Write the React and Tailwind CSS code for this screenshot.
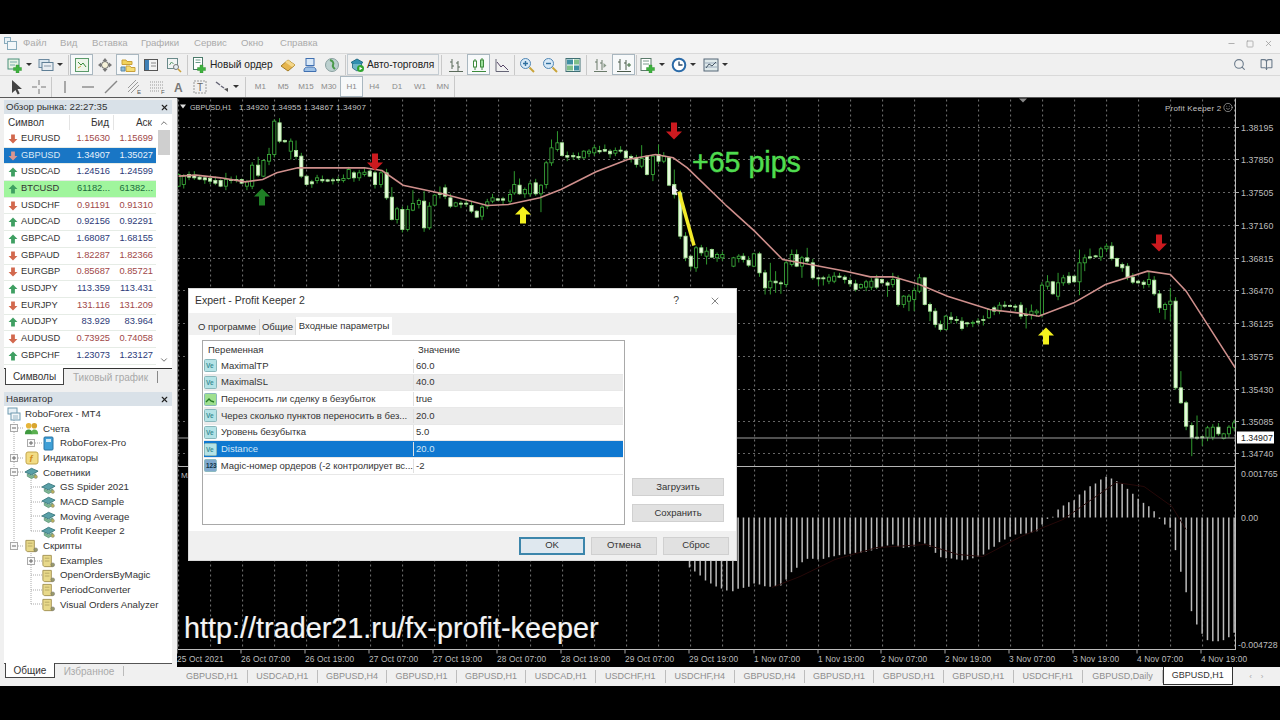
import React from "react";
import { Search, BookOpen, Minus, Square, X, ChevronUp, ChevronDown, Smile } from "lucide-react";

// chart candles, read off the picture: [x, top, bottom, filled, extraHigh, extraLow]
const CANDLES_LEFT = [
  [10,240,275,0],[25,245,270,0],[40,240,248,1],[55,242,250,1],[70,248,254,1],[85,250,256,1],[100,252,260,1],[115,258,266,1],[130,258,275,1],[145,255,275,0,20],[160,255,258,1],[175,255,258,1],[190,255,266,1],[205,262,275,0],[220,212,275,0],[237,212,242,1,25],[252,198,245,0],[268,180,200,0,20],[283,80,180,0,6],[298,85,140,1,14],[313,138,142,1],[330,140,170,0,8,25],[345,168,186,1,30],[360,185,245,1,10],[375,245,270,1],[390,262,268,1],[405,250,258,0],[420,255,259,1],[435,256,260,1],[450,256,258,1,0,12],[465,255,257,1],[480,252,258,0],[495,225,252,0,8],[510,235,250,1],[525,235,250,0],[540,233,240,0],[555,230,245,1],[570,235,270,1],[587,235,270,0],[603,235,310,1],[618,308,375,1,30],[633,343,375,0],[648,345,405,1],[663,345,405,0],[678,327,347,0,40],[695,318,330,0],[710,320,400,1,30,12],[725,335,400,0],[740,302,332,0],[755,296,300,1,20],[770,280,305,1,10],[785,310,335,1],[800,325,335,0],[815,326,329,1],[830,326,328,1],[845,333,350,1],[860,350,368,1],[875,338,365,0,0,12],[890,322,335,0],[905,310,320,0],[920,313,317,1],[935,313,317,1],[955,300,320,0,15],[967,270,295,0,40],[982,272,298,1,20],[997,285,298,0],[1012,268,298,0],[1028,265,298,1],[1043,272,298,0,0,55],[1058,205,270,0],[1073,160,205,0,25],[1090,145,165,0,35],[1103,145,183,1],[1118,183,188,1,12],[1135,183,187,1],[1150,186,190,1],[1165,170,190,0],[1180,170,176,0],[1195,160,175,0],[1210,168,172,1,14],[1225,165,170,1,15],[1240,170,178,1],[1255,168,176,0],[1270,167,170,1],[1285,170,190,1],[1300,186,192,1],[1315,190,210,1],[1330,192,215,0,40],[1345,185,240,1],[1362,185,240,0,0,20],[1378,180,200,1,30],[1393,185,200,0],[1408,190,272,1],[1423,270,300,1,45],[1440,295,425,1],[1455,425,490,1,0,10],[1470,485,515,1,0,12],[1485,460,520,0],[1500,460,475,1],[1515,470,485,0,0,25],[1530,465,488,1],[1545,480,490,0],[1560,480,490,0],
];
const CANDLES_RIGHT = [
  [10,490,515,0],[25,485,492,0],[38,485,495,1],[53,497,512,1],[68,478,515,0],[84,478,535,1],[100,535,580,1,0,20],[115,560,580,0,55,20],[130,560,565,1,30,30],[145,565,568,1,0,30],[160,505,570,0],[176,480,510,0,15],[190,480,515,1,15],[205,490,515,0,0,35],[220,490,500,1,30],[236,505,550,1],[252,550,553,1,0,20],[266,550,553,1,0,20],[282,548,560,0],[297,545,560,0],[312,545,548,1,10],[327,548,555,1],[342,558,568,1],[358,568,585,1],[373,570,580,0],[388,562,578,0],[403,560,578,0],[418,553,578,1],[433,555,565,1],[449,565,572,1,0,35],[464,555,570,0,20],[479,555,630,1],[495,605,630,0,0,10],[510,605,620,0,0,30],[525,588,615,0,0,35],[540,550,590,0],[555,550,630,1],[570,630,650,1,0,30],[585,650,690,1],[600,690,705,1],[615,665,705,0],[630,668,675,1,15],[646,675,678,1,10],[661,680,702,1],[676,685,688,1,0,10],[692,684,686,0],[707,680,682,1],[722,675,678,1,0,15],[738,645,670,0],[753,640,650,1],[768,632,650,0],[783,632,634,1],[798,633,635,1],[813,635,638,1],[829,632,665,1],[844,660,662,1,20,40],[859,650,660,0,20,15],[874,650,655,0],[889,572,660,0],[905,562,575,0,20,10],[920,562,598,1],[935,565,605,0,30],[950,550,565,0],[966,545,565,1],[981,545,562,1],[996,505,562,0,40,40],[1011,490,505,0,10,25],[1026,487,489,1,25],[1042,484,487,1],[1057,463,487,0],[1073,455,463,0,8],[1088,455,492,1],[1103,492,515,1],[1118,510,520,1],[1133,515,548,1],[1148,548,563,1],[1163,560,565,1],[1179,563,570,1],[1194,555,570,0,25],[1209,557,598,1],[1224,598,640,1,10,15],[1240,630,645,0,0,30],[1255,620,630,0,40,50],[1270,620,880,1],[1285,880,925,1,50],[1300,925,995,1],[1316,993,1030,1,0,55],[1331,1028,1030,1,65],[1346,1027,1029,1,0,25],[1361,1000,1028,0],[1376,998,1028,0],[1392,998,1018,1],[1407,1018,1032,0],[1422,998,1018,0],[1437,985,1000,0],
];
const MACD_ENDS = [568,572,576,581,584,587,589,591];
const MACD = [395,388,385,382,372,375,380,382,380,378,360,338,325,308,298,298,300,298,293,290,287,285,283,280,280,277,273,268,262,258,255,262,265,263,260,247,252,262,280,293,296,297,300,302,300,296,292,285,270,262,248,240,232,225,223,222,220,215,195,178,172,150,138,128,122,105,93,80,72,60,52,57,65,72,88,103,118,130,140,155,178,195,205,272,337,398,455,495,523,542,545,545,542,533,520];
const MA_LEFT = [[10,245],[60,242],[130,250],[200,262],[250,255],[290,235],[350,220],[540,220],[590,228],[650,272],[760,297],[890,333],[950,330],[1040,310],[1100,285],[1200,232],[1290,195],[1370,180],[1420,190],[1460,220],[1568,330]];
const MA_RIGHT = [[-14,330],[0,343],[70,410],[150,495],[240,512],[330,530],[400,547],[465,547],[540,570],[620,605],[740,645],[820,655],[880,665],[980,625],[1070,570],[1190,530],[1255,540],[1300,590],[1440,820]];
const PRICES = [["1.38195",128],["1.37850",160],["1.37505",193],["1.37160",226],["1.36815",259],["1.36470",291],["1.36125",324],["1.35775",357],["1.35430",390],["1.35085",422],["1.34740",454]];
const TIMES = [["25 Oct 2021",177],["26 Oct 07:00",241],["26 Oct 19:00",305],["27 Oct 07:00",369],["27 Oct 19:00",433],["28 Oct 07:00",497],["28 Oct 19:00",561],["29 Oct 07:00",625],["29 Oct 19:00",689],["1 Nov 07:00",754],["1 Nov 19:00",818],["2 Nov 07:00",881],["2 Nov 19:00",945],["3 Nov 07:00",1009],["3 Nov 19:00",1073],["4 Nov 07:00",1137],["4 Nov 19:00",1201]];

const QUOTES = [
  ["EURUSD","1.15630","1.15699","down"],["GBPUSD","1.34907","1.35027","down"],["USDCAD","1.24516","1.24599","up"],["BTCUSD","61182...","61382...","up"],["USDCHF","0.91191","0.91310","down"],["AUDCAD","0.92156","0.92291","up"],["GBPCAD","1.68087","1.68155","up"],["GBPAUD","1.82287","1.82366","down"],["EURGBP","0.85687","0.85721","down"],["USDJPY","113.359","113.431","up"],["EURJPY","131.116","131.209","down"],["AUDJPY","83.929","83.964","up"],["AUDUSD","0.73925","0.74058","down"],["GBPCHF","1.23073","1.23127","up"],
];
const TABS = ["GBPUSD,H1","USDCAD,H1","GBPUSD,H4","GBPUSD,H1","GBPUSD,H1","USDCAD,H1","USDCHF,H1","USDCHF,H4","GBPUSD,H4","GBPUSD,H1","GBPUSD,H1","GBPUSD,H1","USDCHF,H1","GBPUSD,Daily"];
const PARAMS = [
  ["v","MaximalTP","60.0"],["v","MaximalSL","40.0"],["b","Переносить ли сделку в безубыток","true"],["v","Через сколько пунктов переносить в без...","20.0"],["v","Уровень безубытка","5.0"],["v","Distance","20.0"],["m","Magic-номер ордеров (-2 контролирует вс...","-2"],
];

const line = (pts, ox) => pts.map(([x, y]) => `${ox + x / 2.85},${95 + y / 3}`).join(" ");

function Candles({ data, ox }) {
  return data.map(([zx, top, bot, filled, hi = 0, lo = 0], i) => {
    const x = ox + zx / 2.85;
    const y1 = 95 + top / 3;
    const y2 = 95 + bot / 3;
    const wickUp = hi ? hi / 3 : (i * 13) % 4 + 1;
    const wickDown = lo ? lo / 3 : (i * 7) % 4 + 1;
    return (
      <g key={i}>
        <line x1={x} x2={x} y1={y1 - wickUp} y2={y2 + wickDown} stroke="#2f9a2f" strokeWidth="1" />
        <rect x={x - 1.6} y={y1} width="3.2" height={Math.max(y2 - y1, 1)} fill={filled ? "#e6fbdc" : "#000"} stroke={filled ? "#a8e498" : "#3fb53f"} strokeWidth="0.8" />
      </g>
    );
  });
}

function Arrow({ x, y, up, color }) {
  const pts = up
    ? `${x},${y} ${x + 8},${y + 8} ${x + 3},${y + 8} ${x + 3},${y + 17} ${x - 3},${y + 17} ${x - 3},${y + 8} ${x - 8},${y + 8}`
    : `${x},${y + 17} ${x + 8},${y + 9} ${x + 3},${y + 9} ${x + 3},${y} ${x - 3},${y} ${x - 3},${y + 9} ${x - 8},${y + 9}`;
  return <polygon points={pts} fill={color} />;
}

function Chart() {
  const grid = [];
  for (let x = 178.6; x < 1235; x += 32) grid.push(x);
  return (
    <svg className="block flex-1 bg-black" width="1103" height="568" viewBox="177 99 1103 568">
      {/* grid */}
      {grid.map((x) => (
        <line key={x} x1={x} x2={x} y1="100" y2="650" stroke="#777" strokeWidth="1" strokeDasharray="2 3" />
      ))}
      {PRICES.map(([label, y]) => (
        <g key={label}>
          <line x1="178" x2="1235" y1={y} y2={y} stroke="#666" strokeWidth="1" strokeDasharray="2 3" />
          <line x1="1235" x2="1239" y1={y} y2={y} stroke="#aaa" />
          <text x="1241" y={y + 3} fontSize="8.8" fill="#bdbdbd" letterSpacing="0.1">{label}</text>
        </g>
      ))}

      <Candles data={CANDLES_LEFT} ox={175} />
      <Candles data={CANDLES_RIGHT} ox={730} />
      <polyline points={line(MA_LEFT, 175)} fill="none" stroke="#cf8f8c" strokeWidth="1.6" />
      <polyline points={line(MA_RIGHT, 730)} fill="none" stroke="#cf8f8c" strokeWidth="1.6" />

      <Arrow x={262} y={189} up color="#1f7f25" />
      <Arrow x={375} y={154} color="#cc1a1f" />
      <Arrow x={674} y={123} color="#cc1a1f" />
      <Arrow x={1159} y={235} color="#cc1a1f" />
      <Arrow x={523} y={207} up color="#f4f11e" />
      <Arrow x={1046} y={328} up color="#f4f11e" />
      <line x1="679" y1="192" x2="694" y2="246" stroke="#f2ea2a" strokeWidth="3.5" />
      <polygon points="672,186 672,195 674.5,193 676,196 677.5,195 676,192 678,191" fill="#eee" />

      {/* price line and separators */}
      <line x1="178" x2="1235" y1="438.5" y2="438.5" stroke="#a0a0a0" />
      <line x1="178" x2="1236" y1="467" y2="467" stroke="#b4b4b4" />
      <line x1="178" x2="1236" y1="650" y2="650" stroke="#bbb" />
      <line x1="1235.5" x2="1235.5" y1="99" y2="650" stroke="#bbb" />
      <line x1="177.5" x2="177.5" y1="99" y2="650" stroke="#888" />
      <rect x="1237" y="432" width="37" height="12" fill="#fff" />
      <text x="1241" y="441.5" fontSize="8.8" fill="#222">1.34907</text>

      {/* macd */}
      {MACD_ENDS.map((y, i) => (
        <line key={i} x1={689.5 + i * 5.33} x2={689.5 + i * 5.33} y1="518" y2={y} stroke="#b8b8b8" strokeWidth="1.5" />
      ))}
      {MACD.map((z, i) => {
        const x = 730 + (8 + i * 15.2) / 2.85;
        return <line key={i} x1={x} x2={x} y1="518" y2={460 + z / 3} stroke="#bcbcbc" strokeWidth="1.5" />;
      })}
      <polyline points="772,588 800,577 835,560 877,548 926,545 958,555 983,557 1021,537 1063,520 1116,483 1144,487 1172,507 1186,530" fill="none" stroke="#260808" strokeWidth="1" />
      <text x="1241" y="477" fontSize="8.8" fill="#bdbdbd">0.001765</text>
      <text x="1241" y="521" fontSize="8.8" fill="#bdbdbd">0.00</text>
      <text x="1238" y="648" fontSize="8.8" fill="#bdbdbd">-0.004728</text>
      <text x="181" y="478" fontSize="8" fill="#bbb">MA</text>

      {/* time axis */}
      {TIMES.map(([label, x]) => (
        <g key={label}>
          <line x1={x} x2={x} y1="650" y2="654" stroke="#aaa" />
          <text x={x} y="662" fontSize="8.4" fill="#bdbdbd" letterSpacing="0.1">{label}</text>
        </g>
      ))}

      {/* chart captions */}
      <polygon points="180,105 186,105 183,109" fill="#ddd" />
      <text x="190" y="110" fontSize="7.2" fill="#c4c4c4">GBPUSD,H1</text>
      <text x="239" y="110" fontSize="8" fill="#c4c4c4" letterSpacing="0.15">1.34920 1.34955 1.34867 1.34907</text>
      <text x="1165" y="111" fontSize="8" fill="#c4c4c4" letterSpacing="0.2">Profit Keeper 2</text>
      <Smile x="1223" y="103" width="10" height="10" color="#c4c4c4" strokeWidth="1.5" />
      <polygon points="1019,99 1027,99 1023,103" fill="#888" />
      <text x="692" y="172" fontSize="28.6" fill="#4fdc4f" stroke="#4fdc4f" strokeWidth="0.5">+65 pips</text>
      <text x="184" y="638" fontSize="28.8" fill="#f4f4f4" stroke="#f4f4f4" strokeWidth="0.2">http://trader21.ru/fx-profit-keeper</text>
    </svg>
  );
}

/* small toolbar drawings */
function Ico({ children, size = 16 }) {
  return <svg width={size} height={size} viewBox="0 0 16 16" fill="none">{children}</svg>;
}
const Caret = () => <span className="ml-[3px] h-0 w-0 border-x-[3px] border-t-[3px] border-x-transparent border-t-[#333]" />;
const Plus = () => <path d="M9 8h3v2.5h2.5v3H12V16H9v-2.5H6.5v-3H9z" fill="#3eb23e" stroke="#2d8a2d" strokeWidth="0.4" />;
const IconNew = () => <Ico><rect x="1" y="2" width="11" height="10" fill="#e8f3e4" stroke="#4b8f7a" /><path d="M3 5h7M3 8h5" stroke="#7aa" /><Plus /></Ico>;
const IconProfiles = () => <Ico><rect x="1" y="2.5" width="10" height="8" fill="#dbe7ef" stroke="#6d8aa0" /><rect x="4" y="5.5" width="11" height="8" fill="#e9eef2" stroke="#5f7f96" /><path d="M6 9h7" stroke="#89a" /></Ico>;
const IconMarket = () => <Ico><rect x="1.5" y="1.5" width="13" height="13" fill="#eef6ea" stroke="#5a9a6a" /><path d="M4 5l3 3 2-2 3 4" stroke="#3a8a3a" /><path d="M4 11l3-2" stroke="#c9a43a" /></Ico>;
const IconNav = () => <Ico><path d="M8 1l2.5 3h-5zM8 15l-2.5-3h5zM1 8l3-2.5v5zM15 8l-3 2.5v-5z" fill="#777" /><circle cx="8" cy="8" r="3.5" stroke="#666" fill="#f5f1d8" /></Ico>;
const IconTerm = () => <Ico><path d="M2 3h4l1 1.5h5v3H2z" fill="#f2d35a" stroke="#c9a03a" /><path d="M6 9h4l1 1.5h4v4H6z" fill="#f5dd75" stroke="#c9a03a" /><path d="M1 10h4v4H1z" fill="#8fbbd8" stroke="#5a89a8" /></Ico>;
const IconData = () => <Ico><rect x="1.5" y="2.5" width="13" height="11" fill="#f3f3f3" stroke="#555" /><rect x="2" y="3" width="4" height="10" fill="#3f7fb5" /><path d="M8 6h5M8 9h5" stroke="#888" /></Ico>;
const IconTester = () => <Ico><rect x="1.5" y="1.5" width="10" height="10" fill="#f1f4f4" stroke="#6a8a8a" /><path d="M3.5 8l2-3 2 2" stroke="#5a9a6a" /><circle cx="10" cy="10" r="2.5" stroke="#777" fill="#e6eef3" /><path d="M12 12l3 3" stroke="#c9a03a" strokeWidth="1.6" /></Ico>;
const IconOrder = () => <Ico><rect x="2.5" y="0.5" width="9" height="12" fill="#fff" stroke="#4a7a6a" /><path d="M4.5 3h5M4.5 5.5h5" stroke="#6a9a8a" /><Plus /></Ico>;
const IconGold = () => <Ico><path d="M1 9l7-6 7 5-7 6z" fill="#e6b54d" stroke="#a37c24" /><path d="M8 3l7 5-3 2-7-5z" fill="#f4d78a" /></Ico>;
const IconCloud = () => <Ico><rect x="4" y="1.5" width="8" height="7" fill="#d9e8f7" stroke="#3f6fb0" /><path d="M2 13c0-2 2-3 4-3h4c2 0 4 1 4 3v1.5H2z" fill="#9cc0e6" stroke="#3f6fb0" /></Ico>;
const IconGlobe = () => <Ico><circle cx="8" cy="8" r="6.5" fill="#bcd0cf" stroke="#8aa0a0" /><path d="M6 3c3 1 4 3 3 5s1 3 2 4" stroke="#4a9a4a" strokeWidth="2" /></Ico>;
const IconAuto = () => <Ico><path d="M2 5.5L8 2l6 3.5L8 9z" fill="#2f8fb0" stroke="#1f6a85" /><path d="M3.5 7v4l4.5 3 4.5-3V7" fill="#6fb6c9" stroke="#3a7a8f" /><circle cx="11.5" cy="11.5" r="3.5" fill="#2ea52e" /><path d="M10.5 9.8l3 1.7-3 1.7z" fill="#fff" /></Ico>;
const IconBars = () => <Ico><path d="M4 2v10M2 5h2M4 9h2M10 4v10M8 6h2M10 10h2M1 14.5h14" stroke="#5a6a5a" /></Ico>;
const IconCandles = () => <Ico><path d="M4 2v11M11 1v12M1 14.5h14" stroke="#3c8a3c" /><rect x="2.5" y="4" width="3" height="6" fill="#fff" stroke="#3c8a3c" /><rect x="9.5" y="3" width="3" height="7" fill="#9adf9a" stroke="#3c8a3c" /></Ico>;
const IconLineChart = () => <Ico><path d="M2 2v12.5h13" stroke="#667" /><path d="M3 5l4 5 2-2 5 5" stroke="#546" /></Ico>;
const IconZoomIn = () => <Ico><circle cx="6.5" cy="6.5" r="5" fill="#d7e9f7" stroke="#4f85b3" /><path d="M4 6.5h5M6.5 4v5" stroke="#2f6f9f" strokeWidth="1.4" /><path d="M10.5 10.5L15 15" stroke="#c9a43a" strokeWidth="2" /></Ico>;
const IconZoomOut = () => <Ico><circle cx="6.5" cy="6.5" r="5" fill="#d7e9f7" stroke="#4f85b3" /><path d="M4 6.5h5" stroke="#2f6f9f" strokeWidth="1.4" /><path d="M10.5 10.5L15 15" stroke="#c9a43a" strokeWidth="2" /></Ico>;
const IconTile = () => <Ico><rect x="1" y="1.5" width="14" height="13" fill="#fff" stroke="#3f6f73" /><rect x="2" y="2.5" width="6" height="5" fill="#3f8fa3" /><rect x="9" y="2.5" width="5" height="5" fill="#7fc08a" /><rect x="2" y="8.5" width="6" height="5" fill="#7fc08a" /><rect x="9" y="8.5" width="5" height="5" fill="#3f8fa3" /></Ico>;
const IconShift = () => <Ico><path d="M4 2v11M9 3v10M2 5h2M7 6h2M1 14.5h13" stroke="#6a7a6a" /><path d="M10.5 6l3 2.5-3 2.5z" fill="#8a9a8a" /></Ico>;
const IconAuto2 = () => <Ico><path d="M4 2v11M10 3v10M2 5h2M8 6h2M1 14.5h14" stroke="#4a5a4a" /><path d="M11 8h4M13 6v4" stroke="#3c6a3c" /></Ico>;
const IconTemplate = () => <Ico><rect x="1" y="1.5" width="10" height="12" fill="#fff" stroke="#5a7a6a" /><path d="M3 4h6M3 7h6" stroke="#7a9a8a" /><Plus /></Ico>;
const IconClock = () => <Ico><circle cx="8" cy="8" r="6.3" fill="#fff" stroke="#2a6aa8" strokeWidth="2" /><path d="M8 4.5V8h3.5" stroke="#2a4a68" strokeWidth="1.3" /></Ico>;
const IconIndicators = () => <Ico><rect x="1" y="2" width="14" height="12" fill="#dfe9ea" stroke="#567" /><path d="M2 6h12M2 10h12" stroke="#9ab" /><path d="M3 11l3-4 3 2 4-4" stroke="#456" /></Ico>;
const IconCursor = () => <Ico><path d="M4 1v13l3.5-3 2.2 4.5 2-1-2.2-4.5H14z" fill="#444" /></Ico>;
const IconCross = () => <Ico><path d="M8 1v5M8 10v5M1 8h5M10 8h5" stroke="#777" /></Ico>;
const IconV = () => <Ico><path d="M8 2v12" stroke="#888" strokeWidth="1.4" /></Ico>;
const IconH = () => <Ico><path d="M2 8h12" stroke="#888" strokeWidth="1.4" /></Ico>;
const IconTrend = () => <Ico><path d="M2 14L14 2" stroke="#888" strokeWidth="1.4" /></Ico>;
const IconChannel = () => <Ico><path d="M2 9l8-8M2 13l10-10M5 14l8-8" stroke="#999" /><text x="11" y="15" fontSize="6" fill="#555">E</text></Ico>;
const IconFib = () => <Ico><path d="M1 3h13M1 6h13M1 9h13M1 12h10" stroke="#999" strokeDasharray="1 1" /><text x="12" y="15" fontSize="6" fill="#555">F</text></Ico>;
const IconA = () => <Ico><text x="3" y="13" fontSize="12" fontWeight="700" fill="#777">A</text></Ico>;
const IconT = () => <Ico><rect x="2" y="2" width="12" height="12" stroke="#999" strokeDasharray="2 1" /><text x="5" y="12" fontSize="10" fill="#666">T</text></Ico>;
const IconShapes = () => <Ico><path d="M2 3l4 3M7 7l3 2" stroke="#667" strokeWidth="1.5" /><path d="M10 10l4 3v-4z" fill="#555" /></Ico>;

function Slot({ w = "w-[23px]", active, children }) {
  return (
    <div className={`${w} h-[21px] flex items-center justify-center ${active ? "border border-[#a9b7c0] bg-[#f7f9fa]" : ""}`}>
      {children}
    </div>
  );
}
const Sep = ({ w = "w-[4px]" }) => <div className={`${w} h-[20px] flex justify-center`}><div className="w-px h-full bg-[#c9c9c9]" /></div>;

function Toolbars() {
  return (
    <>
      <div className="h-[23px] flex items-center pl-[4px] bg-[#f0f0f0] border-y border-[#d9d9d9]">
        <Slot w="w-[30px]"><IconNew /><Caret /></Slot>
        <Slot w="w-[32px]"><IconProfiles /><Caret /></Slot>
        <Sep />
        <Slot active><IconMarket /></Slot>
        <Slot><IconNav /></Slot>
        <Slot active><IconTerm /></Slot>
        <Slot><IconData /></Slot>
        <Slot><IconTester /></Slot>
        <Sep />
        <div className="w-[88px] h-[21px] flex items-center pl-[2px] gap-[3px] text-[10.2px] text-[#222]">
          <IconOrder /> Новый ордер
        </div>
        <Slot w="w-[22px]"><IconGold /></Slot>
        <Slot w="w-[22px]"><IconCloud /></Slot>
        <Slot w="w-[22px]"><IconGlobe /></Slot>
        <Sep />
        <div className="w-[92px] h-[21px] flex items-center pl-[1px] gap-[2px] text-[10.2px] text-[#222] border border-[#c4ccd2]">
          <IconAuto /> Авто-торговля
        </div>
        <Sep w="w-[5px]" />
        <Slot><IconBars /></Slot>
        <Slot active><IconCandles /></Slot>
        <Slot><IconLineChart /></Slot>
        <Sep w="w-[2px]" />
        <Slot><IconZoomIn /></Slot>
        <Slot><IconZoomOut /></Slot>
        <Slot><IconTile /></Slot>
        <Sep w="w-[5px]" />
        <Slot><IconShift /></Slot>
        <Slot active><IconAuto2 /></Slot>
        <Sep w="w-[2px]" />
        <Slot w="w-[30px]"><IconTemplate /><Caret /></Slot>
        <Slot w="w-[32px]"><IconClock /><Caret /></Slot>
        <Slot w="w-[33px]"><IconIndicators /><Caret /></Slot>
        <div className="flex-1" />
        <Search size={13} className="mr-[14px] text-[#6a7a8a]" />
        <BookOpen size={13} className="mr-[7px] text-[#6a7a8a]" />
      </div>
      <div className="h-[22px] flex items-center pl-[4px] bg-[#f0f0f0] border-b border-[#5a5a5a]">
        <Slot><IconCursor /></Slot>
        <Slot><IconCross /></Slot>
        <Sep w="w-[3px]" />
        <Slot><IconV /></Slot>
        <Slot><IconH /></Slot>
        <Slot><IconTrend /></Slot>
        <Slot><IconChannel /></Slot>
        <Slot><IconFib /></Slot>
        <Slot w="w-[21px]"><IconA /></Slot>
        <Slot w="w-[22px]"><IconT /></Slot>
        <Slot w="w-[30px]"><IconShapes /><Caret /></Slot>
        <Sep w="w-[8px]" />
        {["M1","M5","M15","M30","H1","H4","D1","W1","MN"].map((tf) => (
          <Slot key={tf} w="w-[22.8px]" active={tf === "H1"}>
            <span className="text-[8px] text-[#8a8a8a]">{tf}</span>
          </Slot>
        ))}
        <div className="w-px h-[21px] bg-[#c9c9c9]" />
      </div>
    </>
  );
}

function TrendIcon({ dir, muted }) {
  const color = muted ? "#d9958f" : dir === "up" ? "#3f9f62" : "#d2694e";
  return (
    <svg width="10" height="10" viewBox="0 0 9 9">
      {dir === "up"
        ? <path d="M4.5 0.5L8.5 4.5H6.2V8.5H2.8V4.5H0.5z" fill={color} />
        : <path d="M4.5 8.5L8.5 4.5H6.2V0.5H2.8V4.5H0.5z" fill={color} />}
    </svg>
  );
}

function PanelHeader({ title }) {
  return (
    <div className="h-[14px] flex items-center justify-between pl-[2px] pr-[2px] bg-[#d9e1e8] text-[9.7px] text-[#333]">
      <span>{title}</span>
      <X size={9} strokeWidth={3} className="text-[#222] mr-[1px]" />
    </div>
  );
}

function MarketWatch() {
  return (
    <div className="h-[294px] pt-[2px] pl-[4px] pr-[5px] flex flex-col">
      <PanelHeader title="Обзор рынка: 22:27:35" />
      <div className="h-[254px] flex bg-white">
        <div className="w-[152px] overflow-hidden">
          <div className="h-[17px] grid grid-cols-[65px_44px_43px] items-center text-[10px] text-[#333]">
            <span className="pl-[4px]">Символ</span>
            <span className="text-right pr-[4px] border-l border-[#e4e4e4]">Бид</span>
            <span className="text-right pr-[4px] border-l border-[#e4e4e4]">Аск</span>
          </div>
          {QUOTES.map(([sym, bid, ask, dir]) => {
            const selected = sym === "GBPUSD";
            const hot = sym === "BTCUSD";
            const tone = selected ? "text-[#e8f2fb]" : hot ? "text-[#1b6b3c]" : dir === "up" ? "text-[#2c3a78]" : "text-[#a14848]";
            const rowBg = selected ? "bg-[#1976c5]" : hot ? "bg-[#a0f59d]" : "bg-white";
            return (
              <div key={sym} className={`h-[16.7px] grid grid-cols-[65px_44px_43px] items-center text-[9.3px] border-b border-[#e6ece6] ${rowBg}`}>
                <span className={`flex items-center gap-[3px] pl-[4px] ${selected ? "text-[#dceaf6]" : "text-[#333]"}`}>
                  <TrendIcon dir={dir} muted={selected} />{sym}
                </span>
                <span className={`text-right pr-[3px] ${tone}`}>{bid}</span>
                <span className={`text-right pr-[3px] ${tone}`}>{ask}</span>
              </div>
            );
          })}
        </div>
        <div className="w-[16px] flex flex-col items-center pt-[4px] pb-[3px] text-[#555]">
          <ChevronUp size={10} />
          <div className="mt-[2px] w-[12px] h-[25px] bg-[#cfcfcf]" />
          <div className="flex-1" />
          <ChevronDown size={10} />
        </div>
      </div>
      <div className="h-[17px] flex text-[10px] border-t border-[#333] bg-[#f0f0f0]">
        <div className="ml-[1px] w-[59px] -mt-px bg-white border-x border-b border-[#444] flex items-center justify-center text-[#333]">Символы</div>
        <div className="w-[94px] flex items-center justify-center text-[#a8a8a8] border-r border-[#888] my-[2px]">Тиковый график</div>
      </div>
    </div>
  );
}

const Hat = () => <svg width="15" height="14" viewBox="0 0 16 14"><path d="M1 6l7-4 7 3-7 4z" fill="#5aa0a8" stroke="#3d7a80" /><path d="M3.5 8v2.5L8 13l4.5-2.5V8L8 10z" fill="#7fb894" stroke="#4f8a70" strokeWidth="0.7" /><circle cx="12.5" cy="11" r="1.8" fill="#b9b25a" stroke="#777" strokeWidth="0.5" /></svg>;
const ScrollIcon = () => <svg width="15" height="14" viewBox="0 0 16 14"><path d="M2 1h9v10c0 1 .5 2 1 2H4c-1 0-2-1-2-2z" fill="#e8d98a" stroke="#a39252" /><path d="M4 4h5M4 7h5" stroke="#a39252" strokeWidth="0.7" /><circle cx="12.5" cy="11" r="2" fill="#9a9a6a" stroke="#666" strokeWidth="0.5" /></svg>;
const Accounts = () => <svg width="15" height="15" viewBox="0 0 16 16"><circle cx="5" cy="5" r="3" fill="#e6b53a" /><circle cx="11" cy="5" r="3" fill="#d9a52e" /><path d="M1 14c0-4 2-5 4-5s4 1 4 5z" fill="#3f9a3f" /><path d="M8 14c0-4 1-5 3-5s4 1 4 5z" fill="#5ab04f" /></svg>;
const Book = () => <svg width="12" height="15" viewBox="0 0 12 15"><rect x="1" y="1" width="9" height="13" rx="1" fill="#3f9fd6" stroke="#2a74a5" /><rect x="3" y="3" width="5" height="3" fill="#cfe8f5" /></svg>;
const Indic = () => <svg width="14" height="14" viewBox="0 0 14 14"><rect x="1" y="1" width="12" height="12" rx="2" fill="#f2dc84" stroke="#c4a64a" /><text x="4.5" y="11" fontSize="9" fontStyle="italic" fontWeight="700" fill="#d08a1a">f</text></svg>;
const Root = () => <svg width="14" height="14" viewBox="0 0 14 14"><rect x="1" y="1" width="9" height="6" fill="#e8f1f6" stroke="#6f9ab0" /><rect x="4" y="6" width="9" height="7" fill="#f3f7f9" stroke="#6f9ab0" /><path d="M6 9h5M6 11h5" stroke="#6f9ab0" strokeWidth="0.7" /></svg>;

const TREE = [
  [0, Root, "RoboForex - MT4"], [1, Accounts, "Счета"], [2, Book, "RoboForex-Pro"], [1, Indic, "Индикаторы"], [1, Hat, "Советники"],
  [2, Hat, "GS Spider 2021"], [2, Hat, "MACD Sample"], [2, Hat, "Moving Average"], [2, Hat, "Profit Keeper 2"], [1, ScrollIcon, "Скрипты"],
  [2, ScrollIcon, "Examples"], [2, ScrollIcon, "OpenOrdersByMagic"], [2, ScrollIcon, "PeriodConverter"], [2, ScrollIcon, "Visual Orders Analyzer"],
];
const INDENT = ["pl-[2px]", "pl-[20px]", "pl-[37px]"];

function Expander({ x, y, minus }) {
  return (
    <g>
      <rect x={x - 3.5} y={y - 3.5} width="7" height="7" fill="#fafafa" stroke="#aaa" />
      <path d={minus ? `M${x - 2} ${y}h4` : `M${x - 2} ${y}h4M${x} ${y - 2}v4`} stroke="#666" />
    </g>
  );
}

function Navigator() {
  return (
    <div className="h-[294px] pl-[4px] pr-[5px] flex flex-col">
      <PanelHeader title="Навигатор" />
      <div className="relative flex-1 bg-white pt-[1px]">
        {/* dotted tree lines over the panel */}
        <svg className="absolute left-0 top-0" width="168" height="260" viewBox="4 406 168 260">
          <path d="M14 420v126M31 480v51M31 553v51M14 428h10M14 458h10M14 472h10M14 546h10M31 443h11M31 487h11M31 502h11M31 516h11M31 531h11M31 561h11M31 575h11M31 590h11M31 604h11" stroke="#aaa" strokeDasharray="1 1" fill="none" />
          <Expander x={14} y={428} minus />
          <Expander x={31} y={443} />
          <Expander x={14} y={458} />
          <Expander x={14} y={472} minus />
          <Expander x={14} y={546} minus />
          <Expander x={31} y={561} />
        </svg>
        <div className="relative">
          {TREE.map(([level, Icon, label]) => (
            <div key={label} className={`h-[14.67px] flex items-center gap-[4px] text-[9.7px] text-[#333] ${INDENT[level]}`}>
              <span className="w-[15px] flex justify-center"><Icon /></span>
              <span className="whitespace-nowrap">{label}</span>
            </div>
          ))}
        </div>
      </div>
      <div className="h-[17px] mb-[6px] pb-[2px] flex text-[10px] border-t border-[#555] bg-[#f0f0f0]">
        <div className="ml-[1px] w-[50px] -mt-px bg-white border-x border-b border-[#444] flex items-center justify-center text-[#333]">Общие</div>
        <div className="w-[69px] flex items-center justify-center text-[#aaa] border-r border-[#bbb] my-[2px]">Избранное</div>
      </div>
    </div>
  );
}

function ChartTabs() {
  return (
    <div className="h-[19px] flex items-center bg-[#f0f0f0] text-[9px] text-[#8e8e8e]">
      {TABS.map((tab, i) => (
        <div key={i} className={`${tab.endsWith("Daily") ? "w-[80px]" : i === 0 ? "w-[71px]" : "w-[69.6px]"} h-[13px] flex items-center justify-center border-r border-[#bdbdbd] whitespace-nowrap`}>{tab}</div>
      ))}
      <div className="w-[69.5px] h-[18px] -mt-px bg-white border-x border-b border-[#333] text-[#333] flex items-center justify-center">GBPUSD,H1</div>
      <div className="flex-1 flex justify-center gap-[9px] text-[#aaa] text-[8px]"><span>‹</span><span>›</span></div>
    </div>
  );
}

function ParamIcon({ kind }) {
  const fill = kind === "b" ? "#9fe08f" : kind === "m" ? "#7fa9cf" : "#b5e3e6";
  const text = kind === "m" ? "#134" : "#3d8f96";
  return (
    <svg width="13" height="13" viewBox="0 0 13 13">
      <rect x="0.5" y="0.5" width="12" height="12" rx="1" fill={fill} stroke="#88b7bb" />
      {kind === "b"
        ? <path d="M2 9l3-3 2 2 3 1" stroke="#247a24" strokeWidth="1.4" fill="none" />
        : <text x="2" y="9" fontSize="6.5" fontWeight="700" fill={text}>{kind === "m" ? "123" : "Ve"}</text>}
    </svg>
  );
}

const DlgButton = ({ w = "w-[92px]", h = "h-[18px]", ok, children }) => (
  <div className={`${w} ${h} flex items-center justify-center text-[9.5px] text-[#333] ${ok ? "bg-[#dfe8ef] border-2 border-[#3d86ab]" : "bg-[#e1e1e1] border border-[#d0d0d0]"}`}>{children}</div>
);

function ExpertDialog() {
  return (
    <div className="absolute left-[189px] top-[289px] w-[547px] h-[271px] bg-white flex flex-col text-[9.5px] text-[#333] shadow-[0_0_0_1px_#d9d9d9]">
      <div className="h-[24px] flex items-center pl-[6px] pr-[15px] text-[10.5px]">
        <span className="flex-1">Expert - Profit Keeper 2</span>
        <span className="mr-[30px] text-[#444]">?</span>
        <X size={12} strokeWidth={1.2} className="text-[#333]" />
      </div>
      <div className="h-[22px] flex items-end pl-[6px] bg-[#f0f0f0]">
        <div className="w-[65px] h-[16px] flex items-center justify-center border-r border-[#d9d9d9]">О программе</div>
        <div className="w-[36px] h-[16px] flex items-center justify-center border-r border-[#d9d9d9]">Общие</div>
        <div className="w-[96px] h-[18px] flex items-center justify-center bg-white">Входные параметры</div>
      </div>
      <div className="flex-1 flex pl-[13px] pt-[5px] pr-[12px]">
        <div className="w-[423px] h-[185px] border border-[#a9a9a9] pl-px pr-px pt-px">
          <div className="h-[16px] flex items-center">
            <span className="w-[210px] pl-[4px]">Переменная</span>
            <span className="pl-[4px]">Значение</span>
          </div>
          {PARAMS.map(([kind, name, value], i) => {
            const selected = i === 5;
            const bg = selected ? "bg-[#0f78d0] text-[#cfe6f7]" : i === 1 || i === 3 ? "bg-[#ececec]" : "bg-white";
            return (
              <div key={name} className={`h-[16.67px] flex items-center border-b border-[#e8e8e8] ${bg}`}>
                <span className="w-[210px] flex items-center gap-[4px] whitespace-nowrap overflow-hidden border-r border-[#e0e0e0]">
                  <ParamIcon kind={kind} />{name}
                </span>
                <span className="pl-[2px]">{value}</span>
              </div>
            );
          })}
        </div>
        <div className="flex-1 flex flex-col items-end justify-end pb-[9px] gap-[8px]">
          <DlgButton>Загрузить</DlgButton>
          <DlgButton>Сохранить</DlgButton>
        </div>
      </div>
      <div className="h-[29px] flex items-center justify-end gap-[6px] pr-[7px] bg-[#f0f0f0]">
        <DlgButton w="w-[66px]" ok>OK</DlgButton>
        <DlgButton w="w-[66px]">Отмена</DlgButton>
        <DlgButton w="w-[66px]">Сброс</DlgButton>
      </div>
    </div>
  );
}

export default function App() {
  return (
    <div className="relative w-[1280px] h-[720px] overflow-hidden bg-black font-['Liberation_Sans',sans-serif]">
      <div className="h-[34px]" />
      {/* menu bar */}
      <div className="h-[19px] flex items-center bg-[#f4f4f4] text-[9.6px] text-[#aaa]">
        <svg className="ml-[4px] mr-[6px]" width="13" height="13" viewBox="0 0 13 13"><rect x="0.5" y="0.5" width="6" height="6" fill="#e8f1f6" stroke="#88aabb" /><rect x="3.5" y="4.5" width="9" height="8" fill="#f3f7f9" stroke="#88aabb" /></svg>
        <span className="w-[37px]">Файл</span>
        <span className="w-[32px]">Вид</span>
        <span className="w-[49px]">Вставка</span>
        <span className="w-[53px]">Графики</span>
        <span className="w-[47px]">Сервис</span>
        <span className="w-[39px]">Окно</span>
        <span>Справка</span>
        <div className="flex-1" />
        <Minus size={9} className="mr-[10px] text-[#999]" />
        <Square size={8} className="mr-[10px] text-[#999]" />
        <X size={9} className="mr-[7px] text-[#999]" />
      </div>
      <Toolbars />
      <div className="h-[588px] flex bg-[#f0f0f0]">
        <div className="w-[177px] flex flex-col">
          <MarketWatch />
          <Navigator />
        </div>
        <div className="w-[1103px] flex flex-col">
          <Chart />
          <ChartTabs />
        </div>
      </div>
      <ExpertDialog />
    </div>
  );
}
